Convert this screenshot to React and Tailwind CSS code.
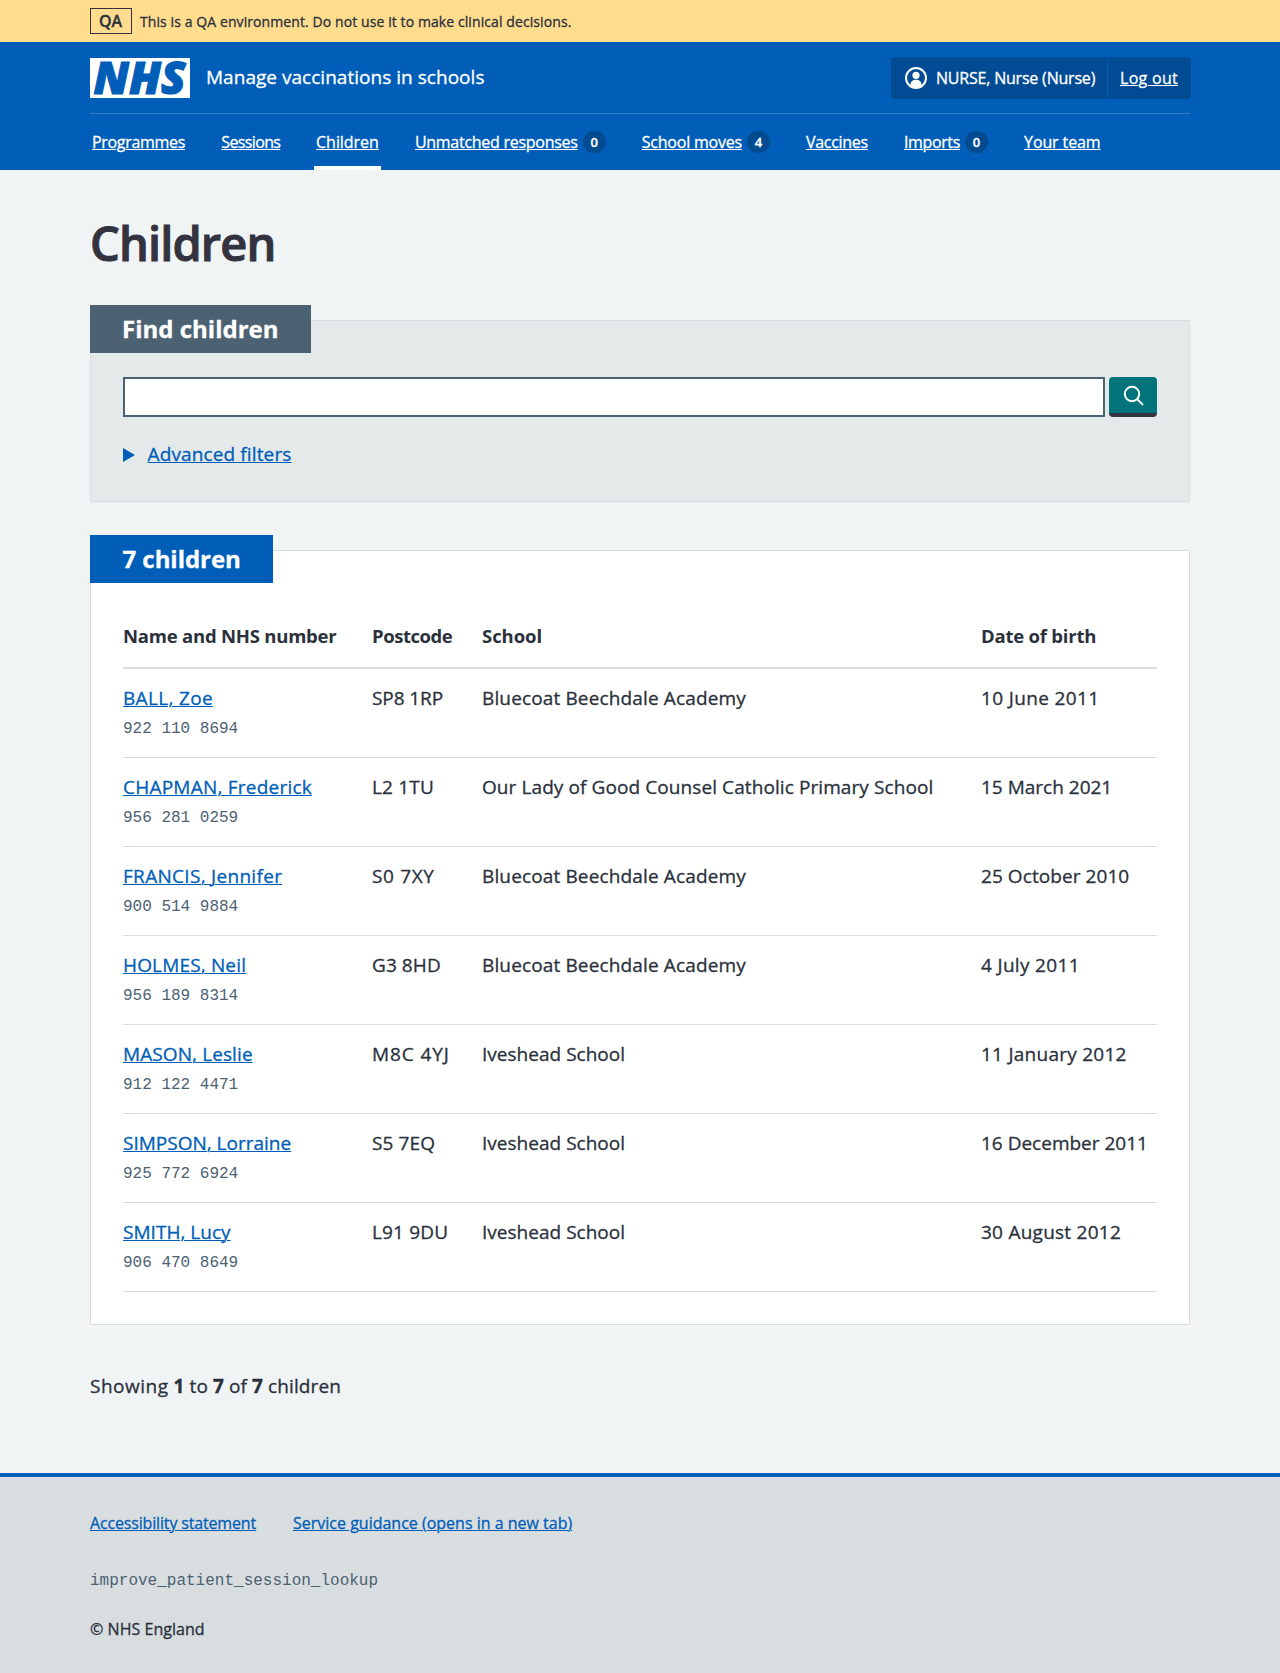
const NAV = [
  { label: "Programmes", cls: "w-[93.3px] tracking-[-0.31px]" },
  { label: "Sessions", cls: "w-[58.8px] tracking-[-0.63px]" },
  { label: "Children", cls: "w-[62.8px] tracking-[-0.05px]", current: true },
  { label: "Unmatched responses", cls: "w-[162.8px] tracking-[-0.27px]", count: 0 },
  { label: "School moves", cls: "w-[100.2px] tracking-[-0.21px]", count: 4 },
  { label: "Vaccines", cls: "w-[62px] tracking-[-0.27px]" },
  { label: "Imports", cls: "w-[56.2px] tracking-[-0.35px]", count: 0 },
  { label: "Your team", cls: "w-[76.5px] tracking-[-0.11px]" },
];

const CHILDREN = [
  { name: "BALL, Zoe", nameCls: "tracking-[0.33px]", nhs: "922 110 8694", postcode: "SP8 1RP", postcodeCls: "tracking-[-0.1px]", school: "Bluecoat Beechdale Academy", schoolCls: "tracking-[0.14px]", dob: "10 June 2011", dobCls: "tracking-[0.36px]" },
  { name: "CHAPMAN, Frederick", nameCls: "tracking-[0.23px]", nhs: "956 281 0259", postcode: "L2 1TU", postcodeCls: "tracking-[0.18px]", school: "Our Lady of Good Counsel Catholic Primary School", schoolCls: "tracking-[0.09px]", dob: "15 March 2021" },
  { name: "FRANCIS, Jennifer", nameCls: "tracking-[0.3px]", nhs: "900 514 9884", postcode: "S0 7XY", postcodeCls: "tracking-[0.65px]", school: "Bluecoat Beechdale Academy", schoolCls: "tracking-[0.14px]", dob: "25 October 2010", dobCls: "tracking-[0.07px]" },
  { name: "HOLMES, Neil", nameCls: "tracking-[0.16px]", nhs: "956 189 8314", postcode: "G3 8HD", postcodeCls: "tracking-[0.08px]", school: "Bluecoat Beechdale Academy", schoolCls: "tracking-[0.14px]", dob: "4 July 2011", dobCls: "tracking-[0.33px]" },
  { name: "MASON, Leslie", nameCls: "tracking-[0.1px]", nhs: "912 122 4471", postcode: "M8C 4YJ", postcodeCls: "tracking-[0.9px]", school: "Iveshead School", schoolCls: "tracking-[0.02px]", dob: "11 January 2012", dobCls: "tracking-[0.25px]" },
  { name: "SIMPSON, Lorraine", nameCls: "", nhs: "925 772 6924", postcode: "S5 7EQ", postcodeCls: "tracking-[0.12px]", school: "Iveshead School", schoolCls: "tracking-[0.02px]", dob: "16 December 2011" },
  { name: "SMITH, Lucy", nameCls: "tracking-[0.03px]", nhs: "906 470 8649", postcode: "L91 9DU", postcodeCls: "tracking-[0.15px]", school: "Iveshead School", schoolCls: "tracking-[0.02px]", dob: "30 August 2012", dobCls: "tracking-[0.25px]" },
];

const LINK = "underline decoration-1 underline-offset-1";

function Logo() {
  return (
    <svg width="100" height="40" viewBox="0 0 100 40" aria-label="NHS" className="block shrink-0 overflow-visible">
      <rect width="100" height="40" fill="#fff" />
      <text
        x="3.5"
        y="36"
        textLength="92"
        lengthAdjust="spacingAndGlyphs"
        fontFamily="Open Sans, sans-serif"
        fontSize="45"
        fontWeight="800"
        fontStyle="italic"
        fill="#005eb8"
        stroke="#005eb8"
        strokeWidth="1.2"
      >
        NHS
      </text>
    </svg>
  );
}

function UserIcon() {
  return (
    <svg width="22" height="22" viewBox="0 0 22 22" className="shrink-0">
      <circle cx="11" cy="11" r="10" fill="none" stroke="#fff" strokeWidth="2" />
      <circle cx="11" cy="8.3" r="3.6" fill="#fff" />
      <path d="M5.4 19.2v-1.4a5 5 0 0 1 5-5h1.2a5 5 0 0 1 5 5v1.4a10 10 0 0 1-11.2 0z" fill="#fff" />
    </svg>
  );
}

function Header() {
  return (
    <header className="h-[128px] bg-[#005eb8] text-white">
      <div className="mx-auto w-[1100px]">
        <div className="flex h-[72px] items-start border-b border-[#2f7cc9]">
          <div className="pt-4">
            <Logo />
          </div>
          <span className="ml-4 mt-[21px] text-[19px] leading-7 tracking-[0.03px] whitespace-nowrap">Manage vaccinations in schools</span>
          <div className="-mr-px ml-auto mt-[15px] flex h-[42px] w-[300px] items-stretch rounded bg-[#004b93]">
            <div className="my-px flex w-[217px] items-center border-r border-[#005eb8] pl-3.5">
              <UserIcon />
              <span className="ml-[9px] text-base leading-6 tracking-[-0.2px] whitespace-nowrap">NURSE, Nurse (Nurse)</span>
            </div>
            <a className={`${LINK} ml-3 mt-[9px] text-base leading-6 tracking-[0.3px] whitespace-nowrap`}>Log out</a>
          </div>
        </div>
        <nav className="flex h-14 gap-8">
          {NAV.map((n) => (
            <div
              key={n.label}
              className={`flex border-b-4 px-[2px] pt-4 text-base leading-6 whitespace-nowrap ${n.current ? "border-white" : "border-transparent"}`}
            >
              <a className={`${LINK} ${n.cls}`}>{n.label}</a>
              {n.count !== undefined && (
                <span className="ml-[5px] mt-px flex h-[22px] w-[23px] items-center justify-center rounded-full bg-[#004b8f] text-[13px] leading-none font-semibold">
                  {n.count}
                </span>
              )}
            </div>
          ))}
        </nav>
      </div>
    </header>
  );
}

function Search() {
  return (
    <section className="mt-[34px] h-[182px] border border-[#d8dddf] bg-[#e4e9e9] px-8">
      <h2 className="-ml-[33px] -mt-4 h-12 w-[221px] bg-[#4c6272] pl-8 pt-2 text-2xl leading-8 font-bold whitespace-nowrap text-white">
        Find children
      </h2>
      <div className="mt-6 flex gap-1">
        <div className="h-10 w-[982px] border-2 border-[#4c6272] bg-white" />
        <div className="flex h-10 w-12 justify-center rounded border-b-4 border-[#353442] bg-[#00747a] pt-2">
          <svg width="22" height="22" viewBox="0 0 22 22" fill="none" stroke="#fff" strokeWidth="2" strokeLinecap="round">
            <circle cx="10" cy="9" r="7.2" />
            <path d="M15.3 14.2l5.2 5.2" />
          </svg>
        </div>
      </div>
      <div className="mt-[23px] flex items-center text-[19px] leading-7 text-[#005eb8]">
        <svg width="12" height="14" viewBox="0 0 12 14" className="mt-0.5">
          <path d="M0 0l12 7-12 7z" fill="#005eb8" />
        </svg>
        <a className={`${LINK} ml-[12.5px] tracking-[0.13px]`}>Advanced filters</a>
      </div>
    </section>
  );
}

const COLS = "grid grid-cols-[249px_110px_498px_177px]";

function Results() {
  return (
    <section className="mt-12 h-[775px] border border-[#d8dddf] bg-white px-8 text-[19px] leading-7">
      <h2 className="-ml-[33px] -mt-4 h-12 w-[183px] bg-[#005eb8] pl-[32.5px] pt-2 text-2xl leading-8 font-bold tracking-[-0.05px] whitespace-nowrap text-white">
        7 children
      </h2>
      <div className={`${COLS} h-[86px] border-b-2 border-[#d8dde0] pt-[39px] text-[18.5px] font-bold whitespace-nowrap [-webkit-text-stroke:0]`}>
        <span className="tracking-[-0.22px]">Name and NHS number</span>
        <span className="tracking-[-0.45px]">Postcode</span>
        <span className="tracking-[-0.05px]">School</span>
        <span className="ml-px tracking-[-0.22px]">Date of birth</span>
      </div>
      {CHILDREN.map((c) => (
        <div key={c.nhs} className={`${COLS} h-[89px] border-b border-[#d8dde0] pt-[15px] whitespace-nowrap`}>
          <div>
            <a className={`${LINK} block text-[#005eb8] ${c.nameCls}`}>{c.name}</a>
            <span className="mt-[3px] block font-['Liberation_Mono',monospace] text-base leading-7 text-[#4c6272] [-webkit-text-stroke:0]">{c.nhs}</span>
          </div>
          <span className={c.postcodeCls}>{c.postcode}</span>
          <span className={c.schoolCls}>{c.school}</span>
          <span className={`ml-px ${c.dobCls ?? ""}`}>{c.dob}</span>
        </div>
      ))}
    </section>
  );
}

function Footer() {
  return (
    <footer className="h-[200px] border-t-4 border-[#005eb8] bg-[#d8dde0]">
      <div className="mx-auto w-[1100px] pt-[34px] text-base leading-6">
        <div className="flex text-[#005eb8]">
          <a className={`${LINK} w-[203px] tracking-[-0.16px]`}>Accessibility statement</a>
          <a className={LINK}>Service guidance (opens in a new tab)</a>
        </div>
        <p className="mt-[34px] font-['Liberation_Mono',monospace] text-[#4c6272] [-webkit-text-stroke:0]">improve_patient_session_lookup</p>
        <p className="mt-6 tracking-[0.04px]">© NHS England</p>
      </div>
    </footer>
  );
}

export default function App() {
  return (
    <div className="min-h-[1673px] w-[1280px] bg-[#f0f4f5] font-['Open_Sans',sans-serif] text-[#2a313b] [-webkit-text-stroke:0.3px]">
      <div className="h-[42px] bg-[#ffdc8e]">
        <div className="mx-auto flex w-[1100px] pt-2">
          <strong className="flex h-[26px] w-[42px] items-center justify-center border border-[#33333f] pr-px text-base leading-none font-semibold">QA</strong>
          <span className="ml-2 mt-0.5 text-sm leading-6 tracking-[0.09px] whitespace-nowrap">
            This is a QA environment. Do not use it to make clinical decisions.
          </span>
        </div>
      </div>
      <Header />
      <main className="mx-auto w-[1100px] pt-[46px]">
        <h1 className="h-[70px] text-[47px] leading-[54px] font-semibold tracking-[-0.85px] text-[#33333f] [-webkit-text-stroke:1px]">Children</h1>
        <Search />
        <Results />
        <p className="mt-[47px] h-[101px] text-[19px] leading-7 tracking-[0.1px]">
          <span className="tracking-[0.5px]">Showing</span> <b className="font-bold">1</b> to <b className="font-bold">7</b> of <b className="font-bold">7</b> children
        </p>
      </main>
      <Footer />
    </div>
  );
}
